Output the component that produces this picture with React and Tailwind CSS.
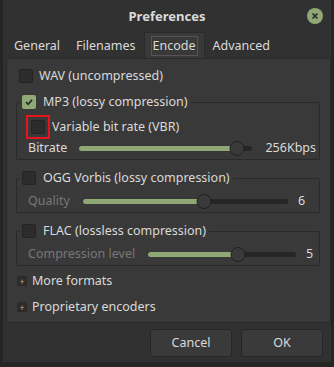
import React from "react";

const Check = ({ checked }) => (
  <span
    className={`flex h-[14px] w-[14px] shrink-0 items-center justify-center rounded-[2px] ${
      checked ? "bg-[#8fa876]" : "border border-[#242424] bg-[#2c2c2c]"
    }`}
  >
    {checked && (
      <svg width="10" height="10" viewBox="0 0 10 10">
        <path d="M2 5.2 L4.2 7.3 L8 2.8" fill="none" stroke="#2a2a2a" strokeWidth="1.8" />
      </svg>
    )}
  </span>
);

const Slider = ({ fill }) => (
  <div className="relative h-[18px] flex-1">
    <div className="absolute left-0 right-0 top-[7px] h-[5px] rounded-full bg-[#262626]" />
    <div className="absolute left-0 top-[7px] h-[5px] rounded-full bg-[#8fa876]" style={{ width: `${fill}%` }} />
    <div
      className="absolute top-[2px] h-[15px] w-[15px] -translate-x-1/2 rounded-full border border-[#1f1f1f] bg-[#3a3a3a]"
      style={{ left: `${fill}%` }}
    />
  </div>
);

const Frame = ({ label, checked, children }) => (
  <fieldset className="rounded-[2px] border border-[#2a2a2a] px-[3px] pb-[2px] pt-0">
    <legend className="flex h-[18px] items-center gap-[7px] pl-[2px] pr-[3px]">
      <Check checked={checked} />
      <span>{label}</span>
    </legend>
    {children}
  </fieldset>
);

const Expander = ({ label }) => (
  <div className="flex h-[16px] items-center gap-[5px]">
    <span className="flex h-[10px] w-[10px] items-center justify-center rounded-[1px] bg-[#2b2b2b] text-[9px] leading-none text-[#aaaaaa]">
      +
    </span>
    <span>{label}</span>
  </div>
);

export default function App() {
  return (
    <div
      className="h-[367px] w-[334px] bg-[#252525] px-[3px] text-[12.5px] text-[#dadada]"
      style={{ fontFamily: '"Noto Sans", sans-serif' }}
    >
      <div className="flex h-[362px] flex-col bg-[#313131]">
        <div className="relative flex h-[32px] shrink-0 items-center justify-center pt-[1px] text-[13px] font-bold">
          Preferences
          <span className="absolute right-[8px] top-[8px] flex h-[16px] w-[16px] items-center justify-center rounded-full bg-[#8fa876]">
            <svg width="8" height="8" viewBox="0 0 8 8">
              <path d="M1.5 1.5 L6.5 6.5 M6.5 1.5 L1.5 6.5" stroke="#2a2a2a" strokeWidth="1.6" />
            </svg>
          </span>
        </div>

        <div className="ml-[3px] flex h-[26px] shrink-0 items-stretch">
          <div className="flex items-center px-[8px] pt-[2px]">General</div>
          <div className="flex items-center px-[8px] pt-[2px]">Filenames</div>
          <div className="flex items-center border-x border-t border-[#2a2a2a] bg-[#393939] px-[6px] pt-[1px]">
            <span className="border border-[#555555] px-[1px] leading-[18px]">Encode</span>
          </div>
          <div className="flex items-center px-[8px] pt-[2px]">Advanced</div>
        </div>

        <div className="ml-[3px] flex h-[265px] shrink-0 flex-col border border-[#2a2a2a] bg-[#393939] pl-[9px] pr-[10px] pt-[8px]">
          <div className="flex h-[18px] items-center gap-[6px] pl-[3px]">
            <Check />
            <span>WAV (uncompressed)</span>
          </div>

          <div className="mt-[8px] flex flex-col gap-[9px]">
            <Frame label="MP3 (lossy compression)" checked>
              <div className="mt-[4px] flex h-[24px] items-center gap-[2px] pl-[6px]">
                <span className="flex h-[24px] w-[24px] items-center justify-center border-2 border-[#e8141c]">
                  <Check />
                </span>
                <span>Variable bit rate (VBR)</span>
              </div>
              <div className="flex h-[18px] items-center pl-[8px]">
                <span className="mr-[12px]">Bitrate</span>
                <Slider fill={91} />
                <span className="ml-[13px]">256Kbps</span>
              </div>
            </Frame>

            <Frame label="OGG Vorbis (lossy compression)">
              <div className="mt-[5px] flex h-[18px] items-center pl-[8px]">
                <span className="mr-[13px] text-[#777777]">Quality</span>
                <Slider fill={59} />
                <span className="ml-[10px] w-[18px]">6</span>
              </div>
            </Frame>

            <Frame label="FLAC (lossless compression)">
              <div className="mt-[5px] flex h-[18px] items-center pl-[8px]">
                <span className="mr-[13px] text-[#777777]">Compression level</span>
                <Slider fill={61} />
                <span className="ml-[10px] w-[10px]">5</span>
              </div>
            </Frame>
          </div>

          <div className="mt-[7px] flex flex-col gap-[10px] pl-[1px]">
            <Expander label="More formats" />
            <Expander label="Proprietary encoders" />
          </div>
        </div>

        <div className="flex justify-end gap-[9px] pr-[8px] pt-[6px]">
          <button className="h-[28px] w-[82px] rounded-[3px] border border-[#262626] bg-[#3a3a3a]">Cancel</button>
          <button className="h-[28px] w-[82px] rounded-[3px] border border-[#262626] bg-[#3a3a3a]">OK</button>
        </div>
      </div>
    </div>
  );
}
